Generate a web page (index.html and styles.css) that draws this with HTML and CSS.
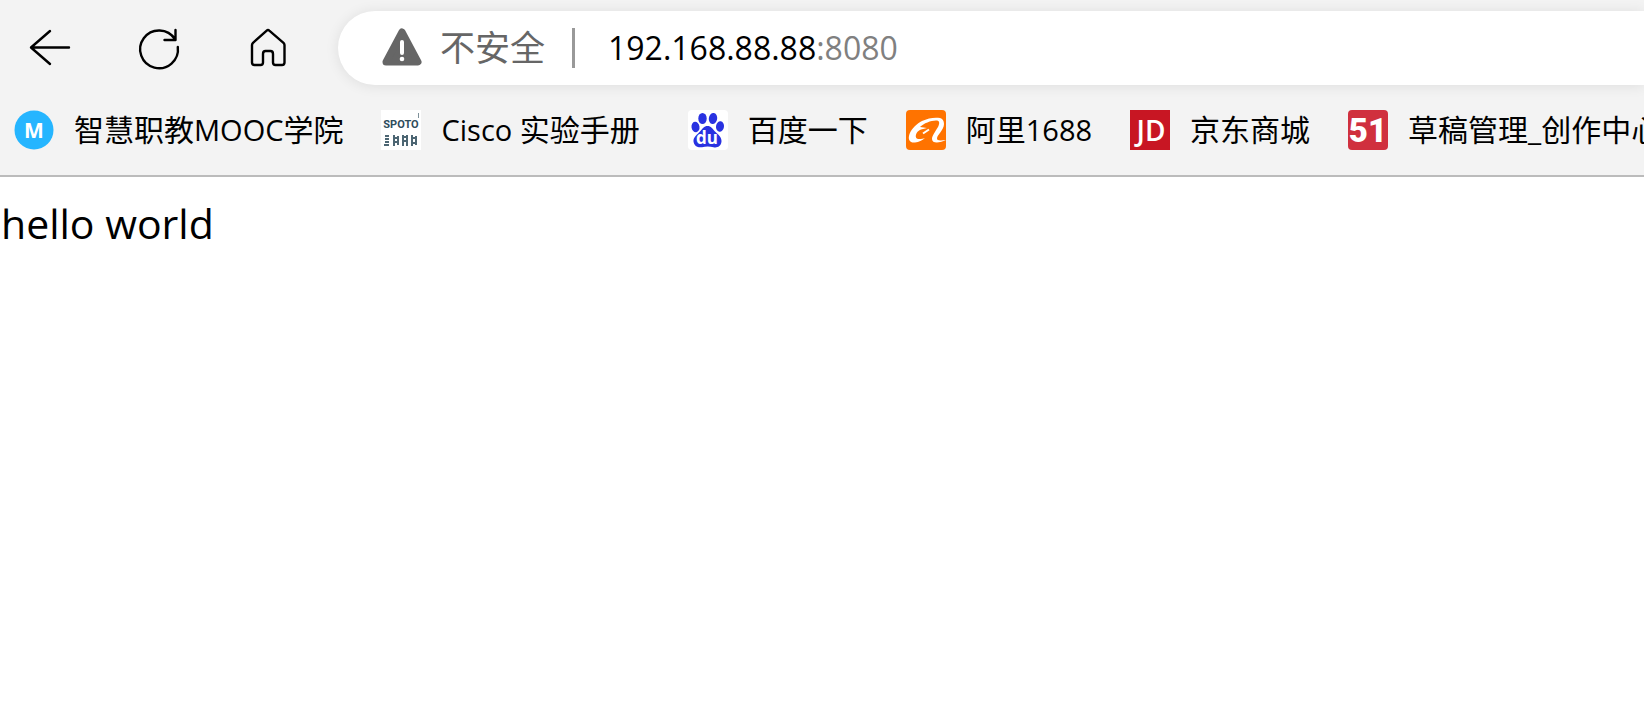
FILE: index.html
```html
<!DOCTYPE html>
<html lang="zh-CN">
<head>
<meta charset="utf-8">
<title>192.168.88.88:8080</title>
<link rel="stylesheet" href="styles.css">
</head>
<body>
<header class="chrome">
  <div class="toolbar">
    <button class="nav-button" type="button" aria-label="返回">
      <svg class="nav-icon" viewBox="0 0 48 48" stroke-width="2.400"><path d="M43 23.500H6M24 7L5 23.500L24 40"/></svg>
    </button>
    <button class="nav-button" type="button" aria-label="刷新">
      <svg class="nav-icon" viewBox="0 0 48 48" stroke-width="2.400"><path d="M42.800 23A18.900 18.900 0 1 1 40 15.200M40.500 6V16H29.500"/></svg>
    </button>
    <button class="nav-button" type="button" aria-label="主页">
      <svg class="nav-icon" viewBox="0 0 48 48" stroke-width="2.400"><path d="M22.700 6.700Q24 5.500 25.300 6.700L39.500 18.800Q40.500 19.800 40.500 21V38.500Q40.500 41 38 41H31.500Q29 41 29 38.500V30Q29 27 26.500 27H21.500Q19 27 19 30V38.500Q19 41 16.500 41H10.500Q8 41 8 38.500V21Q8 19.800 9 18.800Z"/></svg>
    </button>
    <form class="address">
      <button class="security" type="button">
        <svg class="icon" viewBox="0 0 40 40"><path d="M20 5L36 35H4Z" fill="#666" stroke="#666" stroke-width="7" stroke-linejoin="round" transform="translate(0 -1)"/><path d="M20 14V25" stroke="#fff" stroke-width="4" stroke-linecap="round"/><circle cx="20" cy="31" r="2.300" fill="#fff"/></svg>
        <span>不安全</span>
      </button>
      <span class="separator"></span>
      <input class="host" type="text" value="192.168.88.88" aria-label="地址"><span class="port">:8080</span>
    </form>
  </div>
  <nav class="bookmarks">
    <a class="bookmark" href="#">
      <svg class="icon" viewBox="0 0 40 40"><circle cx="20" cy="20" r="19.500" fill="#25b5ff"/><text class="mark-m" x="20" y="28">M</text></svg>
      <span>智慧职教<span class="latin">MOOC</span>学院</span>
    </a>
    <a class="bookmark bookmark-wide" href="#">
      <svg class="icon" viewBox="0 0 40 40"><path fill="#fff" d="M0 0H40V40H0Z"/><text class="mark-spoto" x="20" y="18">SPOTO</text><path d="M37.500 3V8" stroke="#7e9099"/><path d="M4 26h4M4 29h4M4 32h4M3 35h5M13 25v11M14 28h3M14 32h3M17 26v9M22 25v11M23 27h3M23 31h3M26 25v11M31 25v11M32 28h3M32 33h3M35 26v9" fill="none" stroke="#4d6673" stroke-width="2"/></svg>
      <span><span class="latin">Cisco </span>实验手册</span>
    </a>
    <a class="bookmark" href="#">
      <svg class="icon" viewBox="0 0 40 40"><rect width="40" height="40" rx="4" fill="#fff"/><g fill="#2932e1"><ellipse cx="14.500" cy="8.500" rx="4.200" ry="5.500"/><ellipse cx="25" cy="8.500" rx="4.200" ry="5.500" transform="rotate(8 25 8.500)"/><ellipse cx="7.500" cy="17" rx="4" ry="5.300" transform="rotate(-8 7.500 17)"/><ellipse cx="32" cy="16.500" rx="4" ry="5.300" transform="rotate(8 32 16.500)"/><path d="M19.500 16C23 16 24.500 18.500 27 21.500C29.500 24 34 27 33.500 31.500C33 36.500 29 38 25.500 37.200C22 36.400 17.500 36.400 14 37.200C10 38 6 36 5.500 31.500C5 27 9.500 24.500 12 21.500C14.500 18.500 16 16 19.500 16Z"/></g><text class="mark-du" x="19" y="34">du</text></svg>
      <span>百度一下</span>
    </a>
    <a class="bookmark" href="#">
      <svg class="icon" viewBox="0 0 40 40"><rect width="40" height="40" rx="4" fill="#ff7300"/><path d="M34 8C29 7 22 8 16 11C11 13.500 6 18 3.500 24C1.500 30 4 33 9 32.500C13 32 16 30.500 19 28C16 29 11 30 10 27.500C9 24 12 20.500 15 19.500L21 18L14 17C18 13 26 10 31 10.500C34 11 33.500 14 32 17C29 22 26 26 26 29C26 34 34 33 40 30C35 30.500 31 31 31 28.500C31 25 38 20 38 14C38 10.500 36.500 8.500 34 8Z" fill="#fff"/><path d="M17 23.500L23 19.500" stroke="#fff" stroke-width="2"/></svg>
      <span>阿里<span class="latin">1688</span></span>
    </a>
    <a class="bookmark" href="#">
      <svg class="icon" viewBox="0 0 40 40"><path fill="#c81623" d="M0 0H40V40H0Z"/><text class="mark-jd" x="21" y="31">JD</text></svg>
      <span>京东商城</span>
    </a>
    <a class="bookmark" href="#">
      <svg class="icon" viewBox="0 0 40 40"><rect width="40" height="40" rx="4" fill="#d0303e"/><text class="mark-51" x="20" y="32">51</text></svg>
      <span>草稿管理_创作中心</span>
    </a>
  </nav>
</header>
<main class="page">hello world</main>
</body>
</html>
```
FILE: styles.css
```css
* {
  box-sizing: border-box;
}

body {
  margin: 0;
  background: #fff;
  color: #000;
  font-family: "Open Sans", "Noto Sans CJK SC", sans-serif;
  overflow-x: hidden;
}

.chrome {
  background: #f3f3f3;
  border-bottom: 2px solid #bbb;
  overflow: hidden;
}

.toolbar {
  display: flex;
  align-items: center;
  gap: 31px;
  padding: 11px 0 0 11px;
}

button {
  padding: 0;
  border: 0;
  background: none;
  color: inherit;
  font: inherit;
}

.nav-button {
  display: flex;
  flex: none;
  align-items: center;
  justify-content: center;
  width: 78px;
  height: 74px;
}

.nav-icon {
  width: 48px;
  height: 48px;
  fill: none;
  stroke: #000;
  stroke-linecap: round;
  stroke-linejoin: round;
}

.icon {
  flex: none;
  width: 40px;
  height: 40px;
}

.address {
  display: flex;
  flex: 1;
  align-items: center;
  height: 74px;
  padding-left: 44px;
  border-radius: 37px 0 0 37px;
  background: #fff;
  box-shadow: 0 1px 14px rgb(0 0 0 / 9%);
  font-size: 32px;
  line-height: 44px;
}

.security {
  display: flex;
  align-items: center;
  gap: 18px;
  color: #666;
  font-size: 35px;
}

.separator {
  width: 3px;
  height: 40px;
  margin: 0 33px 0 27px;
  background: #999;
}

.host {
  field-sizing: content;
  padding: 0;
  border: 0;
  outline: 0;
  background: none;
  color: #000;
  font: inherit;
}

.port {
  color: #808080;
}

.bookmarks {
  display: flex;
  align-items: center;
  gap: 38px;
  height: 90px;
  padding: 0 0 0 14px;
}

.bookmark {
  display: flex;
  flex: none;
  align-items: center;
  gap: 20px;
  color: #000;
  font-size: 30px;
  line-height: 40px;
  text-decoration: none;
  white-space: nowrap;
}

.bookmark-wide {
  padding-right: 10px;
}

.latin {
  font-size: 29px;
  white-space: pre;
}

.icon text {
  fill: #fff;
  font-weight: 700;
  text-anchor: middle;
}

.icon .mark-m {
  font-size: 21px;
}

.icon .mark-spoto {
  fill: #2f4d5c;
  font-family: Roboto, sans-serif;
  font-size: 11px;
}

.icon .mark-du {
  font-size: 17px;
}

.icon .mark-jd {
  font-size: 28px;
  font-weight: 600;
}

.icon .mark-51 {
  font-family: Roboto, sans-serif;
  font-size: 33px;
  font-weight: 900;
}

.page {
  padding: 16px 1px;
  font-size: 41px;
  line-height: 60px;
}
```
